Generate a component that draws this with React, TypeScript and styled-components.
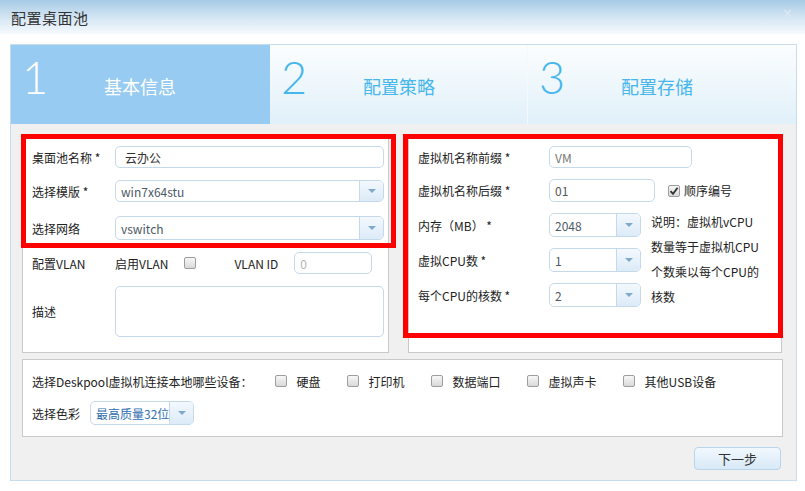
import React from "react"
import styled, { createGlobalStyle } from "styled-components"

const GlobalStyle = createGlobalStyle`
    html, body {
        margin: 0;
        padding: 0;
        background: #ffffff;
    }
    body {
        font-family: "Noto Sans CJK SC", "Noto Sans", sans-serif;
        font-size: 12px;
        color: #222;
    }
`

const Window = styled.div`
    width: 805px;
    height: 491px;
    background: #ffffff;
    overflow: hidden;
`

const TitleBar = styled.div`
    height: 34px;
    display: flex;
    align-items: center;
    justify-content: space-between;
    padding: 0 12px 0 11px;
    box-sizing: border-box;
    background: linear-gradient(to bottom, #a7cbe5 0%, #d6e7f4 55%, #f6fafd 100%);
`

const Title = styled.span`
    font-size: 15px;
    color: #333;
    letter-spacing: 0.5px;
`

const Close = styled.span`
    font-family: "DejaVu Sans", sans-serif;
    font-size: 13px;
    font-weight: bold;
    color: #dbe8f3;
    margin-top: -8px;
`

const Panel = styled.div`
    margin: 10px 0 0 10px;
    width: 787px;
    height: 437px;
    box-sizing: border-box;
    border: 1px solid #c7dced;
    background: #f0f0f0;
`

const Steps = styled.div`
    display: grid;
    grid-template-columns: 259px 257px 1fr;
    height: 79px;
`

const Step = styled.div<{ $active?: boolean; $divider?: boolean }>`
    display: flex;
    align-items: center;
    padding-left: 11px;
    color: ${(p) => (p.$active ? "#ffffff" : "#47b6ec")};
    background: ${(p) =>
        p.$active ? "#97cbf1" : "linear-gradient(to bottom, #fbfdff 0%, #eef7fc 50%, #e0f0f9 100%)"};
    border-left: ${(p) => (p.$divider ? "1px solid #f3f9fd" : "none")};
`

const StepNum = styled.span`
    font-family: "Lato", "Open Sans", sans-serif;
    font-weight: 300;
    font-size: 45px;
    line-height: 45px;
    width: 82px;
    align-self: flex-start;
    margin-top: 10px;
`

const StepLabel = styled.span`
    font-size: 18px;
    margin-top: 2px;
`

const Content = styled.div`
    padding: 11px 13px 0 11px;
`

const Columns = styled.div`
    display: grid;
    grid-template-columns: 367px 374px;
    column-gap: 19px;
`

const Card = styled.div`
    position: relative;
    background: #ffffff;
    border: 1px solid #c9c9c9;
    box-sizing: border-box;
`

const FormCard = styled(Card)`
    height: 218px;
    padding: 10px 4px 0 9px;
`

const Highlight = styled.div<{ $l: number; $t: number; $w: number; $h: number }>`
    position: absolute;
    left: ${(p) => p.$l}px;
    top: ${(p) => p.$t}px;
    width: ${(p) => p.$w}px;
    height: ${(p) => p.$h}px;
    border: 5px solid #ff0000;
    box-sizing: border-box;
    pointer-events: none;
`

const Rows = styled.div`
    display: flex;
    flex-direction: column;
    gap: 12px;
`

const Row = styled.div<{ $h?: number; $mt?: number }>`
    display: flex;
    align-items: center;
    height: ${(p) => p.$h ?? 22}px;
    margin-top: ${(p) => p.$mt ?? 0}px;
`

const Label = styled.span<{ $w: number }>`
    width: ${(p) => p.$w}px;
    flex: none;
    white-space: nowrap;
`

const Field = styled.div<{ $w?: number; $muted?: boolean }>`
    width: ${(p) => (p.$w ? `${p.$w}px` : "auto")};
    flex: ${(p) => (p.$w ? "none" : "1")};
    height: 100%;
    box-sizing: border-box;
    border: 1px solid #c5d9ea;
    border-radius: 5px;
    background: #ffffff;
    display: flex;
    align-items: center;
    padding-left: 8px;
    color: ${(p) => (p.$muted ? "#b5b5b5" : "#555")};
    font-family: "Noto Sans CJK SC", "Noto Sans", sans-serif;
`

const SelectBox = styled.div<{ $w?: number; $color?: string }>`
    width: ${(p) => (p.$w ? `${p.$w}px` : "auto")};
    flex: ${(p) => (p.$w ? "none" : "1")};
    height: 100%;
    box-sizing: border-box;
    border: 1px solid #c5d9ea;
    border-radius: 5px;
    background: #ffffff;
    display: flex;
    overflow: hidden;
    color: ${(p) => p.$color ?? "#4d5a66"};
`

const SelectValue = styled.span`
    flex: 1;
    display: flex;
    align-items: center;
    padding-left: 5px;
    white-space: nowrap;
    overflow: hidden;
`

const SelectArrow = styled.span`
    width: 23px;
    flex: none;
    border-left: 1px solid #c5d9ea;
    background: linear-gradient(to bottom, #f3f8fd 0%, #dcebf8 100%);
    display: flex;
    align-items: center;
    justify-content: center;
    &::after {
        content: "";
        border-left: 4px solid transparent;
        border-right: 4px solid transparent;
        border-top: 4px solid #7fa8ca;
    }
`

const Check = styled.span`
    width: 12px;
    height: 12px;
    flex: none;
    box-sizing: border-box;
    border: 1px solid #9d9d9d;
    border-radius: 2px;
    background: linear-gradient(to bottom, #f7f7f7, #d9d9d9);
    display: inline-flex;
    align-items: center;
    justify-content: center;
    color: #333;
`

const TextArea = styled.div`
    flex: 1;
    height: 100%;
    box-sizing: border-box;
    border: 1px solid #c5d9ea;
    border-radius: 5px;
    background: #ffffff;
`

const Inline = styled.span<{ $ml?: number }>`
    margin-left: ${(p) => p.$ml ?? 0}px;
    white-space: nowrap;
`

const Split = styled.div`
    display: flex;
    margin-top: 11px;
`

const SelectRows = styled.div`
    display: flex;
    flex-direction: column;
    gap: 11px;
`

const Note = styled.div`
    width: 112px;
    margin-left: 10px;
    margin-top: -4px;
    line-height: 25px;
    color: #222;
`

const BottomCard = styled(Card)`
    width: 761px;
    height: 78px;
    margin-top: 6px;
    padding: 10px 0 0 9px;
    display: flex;
    flex-direction: column;
    gap: 9px;
`

const Devices = styled.div`
    display: flex;
    align-items: center;
    height: 22px;
`

const DevicesLabel = styled.span`
    margin-right: 22px;
`

const Device = styled.span`
    display: inline-flex;
    align-items: center;
    gap: 10px;
    & + & {
        margin-left: 26px;
    }
`

const Footer = styled.div`
    display: flex;
    justify-content: flex-end;
    padding: 10px 2px 0 0;
`

const Button = styled.button`
    width: 87px;
    height: 23px;
    border: 1px solid #b9d5eb;
    border-radius: 4px;
    background: linear-gradient(to bottom, #f1f8fe, #d8e9f7);
    font-family: "Noto Sans CJK SC", sans-serif;
    font-size: 13px;
    color: #333;
    padding: 0;
`

const Select = ({ value, w, color }: { value: string; w?: number; color?: string }) => (
    <SelectBox $w={w} $color={color}>
        <SelectValue>{value}</SelectValue>
        <SelectArrow />
    </SelectBox>
)

const CheckMark = () => (
    <svg width="10" height="10" viewBox="0 0 10 10">
        <path d="M1.5 5.2 L4 7.8 L8.6 1.8" fill="none" stroke="#333" strokeWidth="1.8" />
    </svg>
)

const devices = ["硬盘", "打印机", "数据端口", "虚拟声卡", "其他USB设备"]

const App = () => {
    return (
        <Window>
            <GlobalStyle />
            <TitleBar>
                <Title>配置桌面池</Title>
                <Close>✕</Close>
            </TitleBar>
            <Panel>
                <Steps>
                    <Step $active>
                        <StepNum>1</StepNum>
                        <StepLabel>基本信息</StepLabel>
                    </Step>
                    <Step>
                        <StepNum>2</StepNum>
                        <StepLabel>配置策略</StepLabel>
                    </Step>
                    <Step $divider>
                        <StepNum>3</StepNum>
                        <StepLabel>配置存储</StepLabel>
                    </Step>
                </Steps>
                <Content>
                    <Columns>
                        <FormCard>
                            <Rows>
                                <Row>
                                    <Label $w={83}>桌面池名称 *</Label>
                                    <Field style={{ paddingLeft: 9, color: "#333" }}>云办公</Field>
                                </Row>
                                <Row>
                                    <Label $w={83}>选择模版 *</Label>
                                    <Select value="win7x64stu" />
                                </Row>
                                <Row $h={24} $mt={2}>
                                    <Label $w={83}>选择网络</Label>
                                    <Select value="vswitch" />
                                </Row>
                                <Row>
                                    <Label $w={83}>配置VLAN</Label>
                                    <Inline>启用VLAN</Inline>
                                    <Inline $ml={16}>
                                        <Check />
                                    </Inline>
                                    <Inline $ml={38}>VLAN ID</Inline>
                                    <Inline $ml={16} style={{ height: "100%", display: "flex" }}>
                                        <Field $w={78} $muted style={{ paddingLeft: 5 }}>
                                            0
                                        </Field>
                                    </Inline>
                                </Row>
                                <Row $h={51}>
                                    <Label $w={83}>描述</Label>
                                    <TextArea />
                                </Row>
                            </Rows>
                            <Highlight $l={-2} $t={-2} $w={375} $h={114} />
                        </FormCard>
                        <FormCard>
                            <Row>
                                <Label $w={131}>虚拟机名称前缀 *</Label>
                                <Field $w={143} style={{ color: "#777", paddingLeft: 5 }}>
                                    VM
                                </Field>
                            </Row>
                            <Row $h={23} $mt={11}>
                                <Label $w={131}>虚拟机名称后缀 *</Label>
                                <Field $w={106} style={{ paddingLeft: 5 }}>
                                    01
                                </Field>
                                <Inline $ml={13} style={{ display: "flex" }}>
                                    <Check>
                                        <CheckMark />
                                    </Check>
                                </Inline>
                                <Inline $ml={4}>顺序编号</Inline>
                            </Row>
                            <Split>
                                <SelectRows>
                                    <Row $h={24}>
                                        <Label $w={131}>内存（MB） *</Label>
                                        <Select value="2048" w={92} />
                                    </Row>
                                    <Row $h={24}>
                                        <Label $w={131}>虚拟CPU数 *</Label>
                                        <Select value="1" w={92} />
                                    </Row>
                                    <Row $h={24}>
                                        <Label $w={131}>每个CPU的核数 *</Label>
                                        <Select value="2" w={92} />
                                    </Row>
                                </SelectRows>
                                <Note>说明：虚拟机vCPU数量等于虚拟机CPU个数乘以每个CPU的核数</Note>
                            </Split>
                            <Highlight $l={-6} $t={-2} $w={380} $h={204} />
                        </FormCard>
                    </Columns>
                    <BottomCard>
                        <Devices>
                            <DevicesLabel>选择Deskpool虚拟机连接本地哪些设备：</DevicesLabel>
                            {devices.map((d) => (
                                <Device key={d}>
                                    <Check />
                                    {d}
                                </Device>
                            ))}
                        </Devices>
                        <Row $h={24}>
                            <Label $w={58}>选择色彩</Label>
                            <Select value="最高质量32位" w={104} color="#2f6db0" />
                        </Row>
                    </BottomCard>
                    <Footer>
                        <Button>下一步</Button>
                    </Footer>
                </Content>
            </Panel>
        </Window>
    )
}

export default App
